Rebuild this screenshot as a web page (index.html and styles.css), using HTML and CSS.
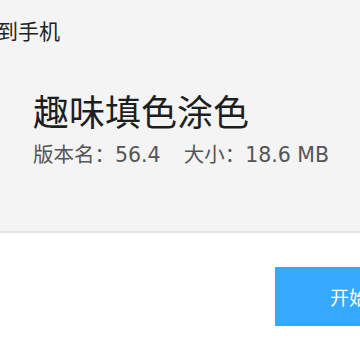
FILE: index.html
```html
<!DOCTYPE html>
<html lang="zh">
<head>
<meta charset="utf-8">
<link rel="stylesheet" href="styles.css">
</head>
<body>
<div class="page">
  <div class="top">
    <div class="header">到手机</div>
    <div class="info">
      <div class="title">趣味填色涂色</div>
      <div class="meta"><span>版本名：56.4</span><span>大小：18.6 MB</span></div>
    </div>
  </div>
  <div class="bottom">
    <button class="btn">开始安装</button>
  </div>
</div>
</body>
</html>
```
FILE: styles.css
```css
html, body {
  margin: 0;
  padding: 0;
  overflow: hidden;
  background: #ffffff;
}
.page {
  width: 360px;
  height: 360px;
  font-family: "Noto Sans CJK SC", "Noto Sans", sans-serif;
}
.top {
  background: #f4f4f4;
  height: 231px;
  border-bottom: 2px solid #e3e3e3;
  display: flex;
  flex-direction: column;
}
.header {
  font-size: 21px;
  line-height: 22px;
  color: #222;
  margin: 19px 0 0 -3px;
}
.info {
  padding: 48px 0 0 33px;
}
.title {
  font-size: 36px;
  line-height: 42px;
  color: #1e1e1e;
}
.meta {
  margin-top: 11px;
  font-family: "DejaVu Sans", "Noto Sans CJK SC", sans-serif;
  font-size: 20.5px;
  line-height: 26px;
  color: #555;
  display: flex;
  gap: 23px;
  white-space: nowrap;
}
.bottom {
  display: flex;
  justify-content: flex-start;
  padding: 34px 0 0 275px;
}
.btn {
  flex: none;
  width: 160px;
  height: 59px;
  border: none;
  background: #35a9fd;
  color: #fff;
  font-family: "Noto Sans CJK SC", sans-serif;
  font-size: 19px;
  text-align: left;
  padding: 0 0 0 55px;
  white-space: nowrap;
}
```
